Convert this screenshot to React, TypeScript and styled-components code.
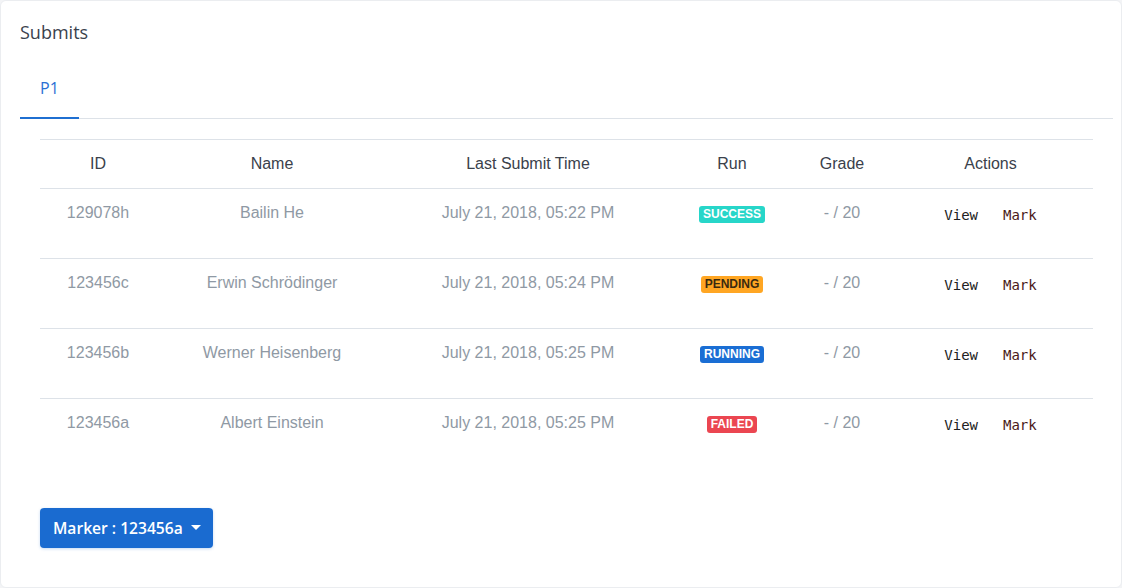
import React from "react";
import styled, { createGlobalStyle } from "styled-components";

const GlobalStyle = createGlobalStyle`
  html, body { margin: 0; padding: 0; background: #f3f4f6; }
  body { font-family: "Liberation Sans", Arial, sans-serif; }
  * { box-sizing: border-box; }
`;

const Card = styled.div`
  width: 1122px;
  height: 588px;
  background: #fff;
  border: 1px solid #ebedf0;
  border-radius: 6px;
  padding: 19px 8px 0 19px;
`;

const Title = styled.h2`
  margin: 0;
  font-family: "Open Sans", sans-serif;
  font-size: 18px;
  font-weight: 400;
  line-height: 24px;
  color: #3a424d;
`;

const TabBar = styled.div`
  display: flex;
  margin-top: 14px;
  border-bottom: 1px solid #dde2e8;
`;

const Tab = styled.div<{ $active?: boolean }>`
  padding: 20px 20px 19px;
  font-family: "Open Sans", sans-serif;
  font-size: 16px;
  line-height: 20px;
  color: ${(p) => (p.$active ? "#2b6fd4" : "#555")};
  border-bottom: 2px solid ${(p) => (p.$active ? "#1f6fd1" : "transparent")};
  margin-bottom: -1px;
`;

const Table = styled.table`
  margin: 20px 20px 0 20px;
  width: 1053px;
  table-layout: fixed;
  border-collapse: collapse;
  border-top: 1px solid #dde2e8;
`;

const Th = styled.th<{ $w: number }>`
  width: ${(p) => p.$w}px;
  height: 49px;
  padding: 0;
  font-size: 16px;
  font-weight: 400;
  color: #3a414b;
  text-align: center;
  vertical-align: middle;
  border-bottom: 1px solid #dde2e8;
`;

const Tr = styled.tr<{ $last?: boolean }>`
  border-bottom: ${(p) => (p.$last ? "none" : "1px solid #dde2e8")};
`;

const Td = styled.td`
  height: 70px;
  padding: 13px 0 0;
  font-size: 16px;
  line-height: 22px;
  color: #8f99a4;
  text-align: center;
  vertical-align: top;
`;

const badgeColors: Record<string, { bg: string; fg: string }> = {
  SUCCESS: { bg: "#27d6c9", fg: "#fff" },
  PENDING: { bg: "#ffa623", fg: "#3a2a10" },
  RUNNING: { bg: "#1a6ed4", fg: "#fff" },
  FAILED: { bg: "#eb4651", fg: "#fff" },
};

const Badge = styled.span<{ $status: string }>`
  display: inline-block;
  padding: 0 4px;
  height: 17px;
  line-height: 17px;
  border-radius: 3px;
  font-size: 12px;
  font-weight: 700;
  vertical-align: middle;
  position: relative;
  top: 1px;
  background: ${(p) => badgeColors[p.$status].bg};
  color: ${(p) => badgeColors[p.$status].fg};
`;

const Actions = styled.div`
  display: flex;
  justify-content: center;
  gap: 25px;
  padding-top: 2px;
`;

const ActionButton = styled.button<{ $tone?: "mark" }>`
  border: none;
  background: none;
  padding: 0;
  font-family: "DejaVu Sans Mono", monospace;
  font-size: 14px;
  line-height: 22px;
  color: ${(p) => (p.$tone === "mark" ? "#4a1a1a" : "#222")};
  cursor: pointer;
`;

const Footer = styled.div`
  padding: 39px 0 0 20px;
`;

const MarkerButton = styled.button`
  display: inline-flex;
  align-items: center;
  gap: 8px;
  height: 40px;
  padding: 0 12px 0 13px;
  border: none;
  border-radius: 4px;
  background: #1a6bd0;
  color: #fff;
  font-family: "Open Sans", sans-serif;
  font-size: 15.6px;
  font-weight: 600;
  box-shadow: 0 1px 3px rgba(26, 107, 208, 0.25);
`;

const Caret = styled.span`
  width: 0;
  height: 0;
  border-left: 5px solid transparent;
  border-right: 5px solid transparent;
  border-top: 5px solid #fff;
`;

const rows = [
  { id: "129078h", name: "Bailin He", time: "July 21, 2018, 05:22 PM", run: "SUCCESS" },
  { id: "123456c", name: "Erwin Schrödinger", time: "July 21, 2018, 05:24 PM", run: "PENDING" },
  { id: "123456b", name: "Werner Heisenberg", time: "July 21, 2018, 05:25 PM", run: "RUNNING" },
  { id: "123456a", name: "Albert Einstein", time: "July 21, 2018, 05:25 PM", run: "FAILED" },
];

const cols: [string, number][] = [
  ["ID", 116],
  ["Name", 232],
  ["Last Submit Time", 280],
  ["Run", 128],
  ["Grade", 92],
  ["Actions", 205],
];

export default function App() {
  return (
    <>
      <GlobalStyle />
      <Card>
        <Title>Submits</Title>
        <TabBar>
          <Tab $active>P1</Tab>
        </TabBar>
        <Table>
          <thead>
            <tr>
              {cols.map(([c, w]) => (
                <Th key={c} $w={w}>
                  {c}
                </Th>
              ))}
            </tr>
          </thead>
          <tbody>
            {rows.map((r, i) => (
              <Tr key={r.id} $last={i === rows.length - 1}>
                <Td>{r.id}</Td>
                <Td>{r.name}</Td>
                <Td>{r.time}</Td>
                <Td>
                  <Badge $status={r.run}>{r.run}</Badge>
                </Td>
                <Td>- / 20</Td>
                <Td>
                  <Actions>
                    <ActionButton>View</ActionButton>
                    <ActionButton $tone="mark">Mark</ActionButton>
                  </Actions>
                </Td>
              </Tr>
            ))}
          </tbody>
        </Table>
        <Footer>
          <MarkerButton>
            Marker : 123456a
            <Caret />
          </MarkerButton>
        </Footer>
      </Card>
    </>
  );
}
